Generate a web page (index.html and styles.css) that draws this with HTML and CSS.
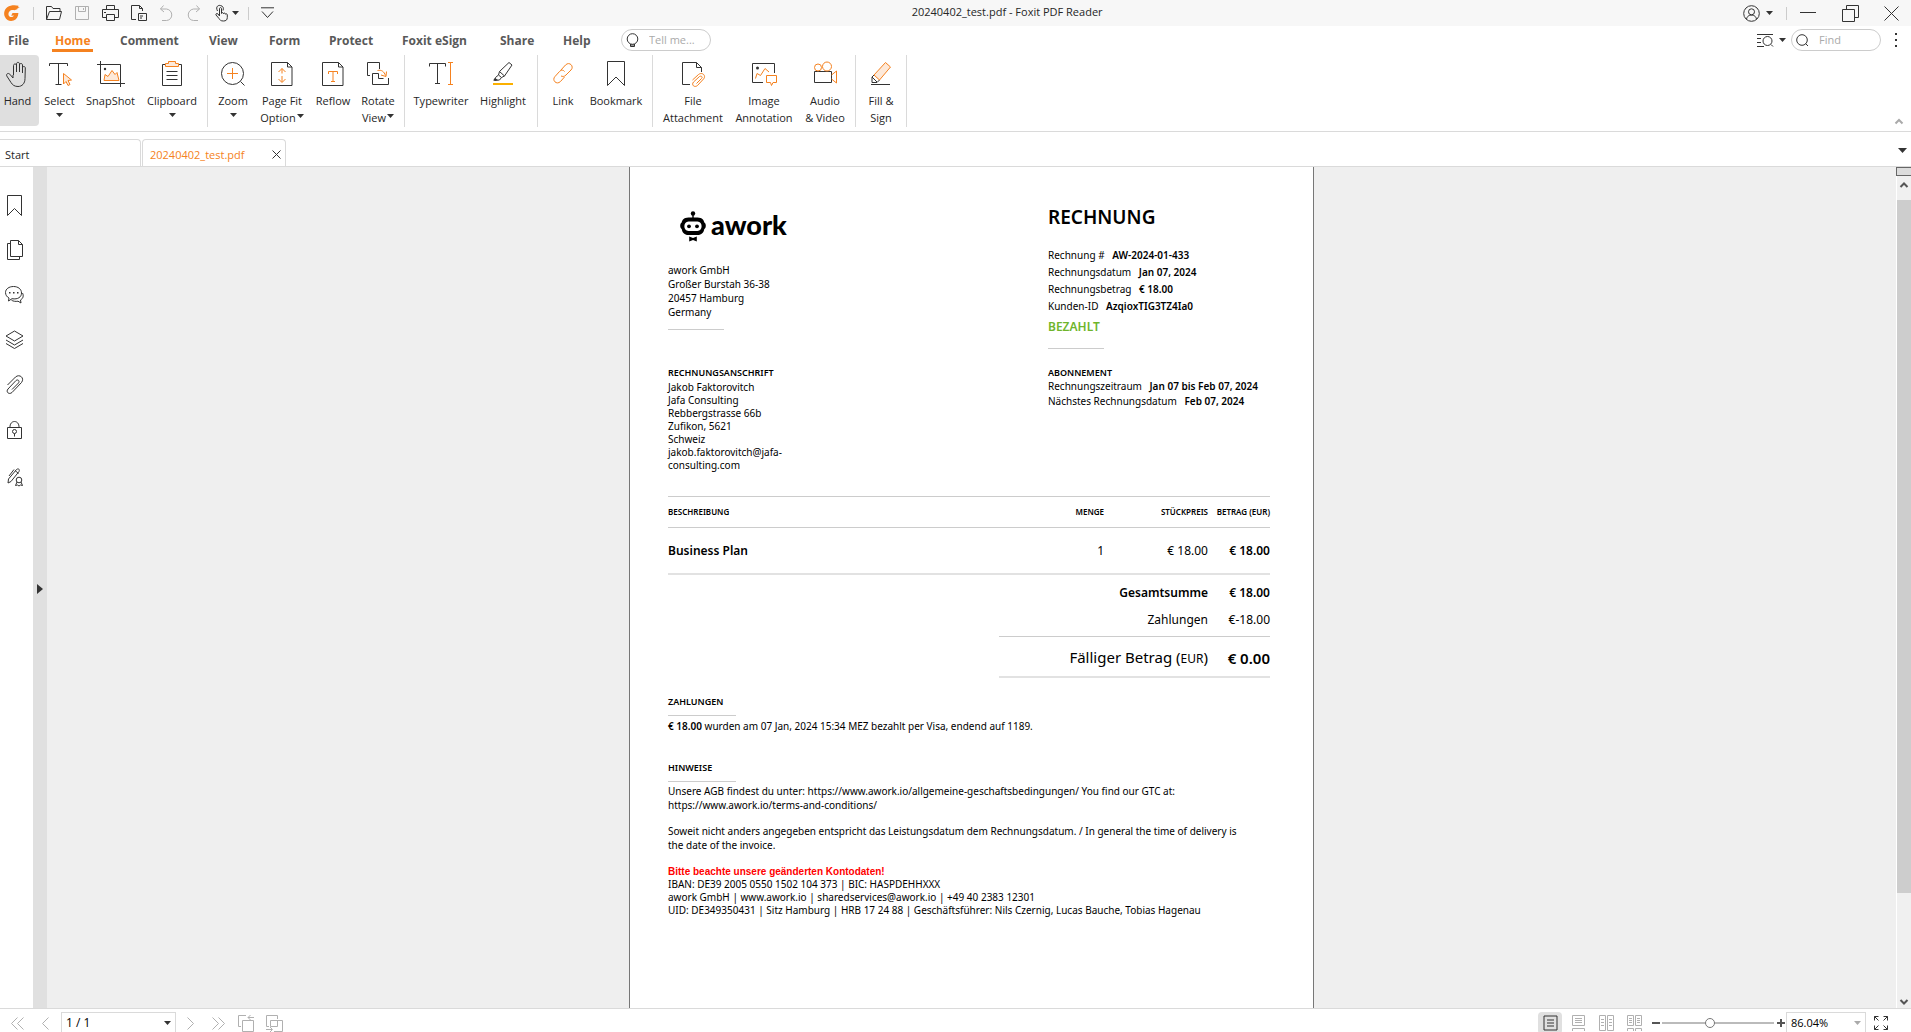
FILE: index.html
```html
<!DOCTYPE html>
<html lang="en">
<head>
<meta charset="utf-8">
<title>20240402_test.pdf - Foxit PDF Reader</title>
<link rel="stylesheet" href="styles.css">
</head>
<body>
<div class="app">

<header class="titlebar">
  <div class="quick">
    <svg class="logo" width="16" height="16" viewBox="0 0 16 16"><path d="M14.500 .8C11-.2 6.600 0 3.200 2.200.2 4.500-.6 8.700 1 12c1.600 3.400 5.400 4.700 8.600 3.400 2.900-1 4.700-3.900 4.800-7.500l-5.900.2-1.300 2.600 2.700-.2c-.8 1.500-2.600 2.100-4.100 1.200-1.700-1.100-1.800-3.700-.4-5.300 1.300-1.500 3.300-1.800 5-1.200l3.400-1.100-1.100-.2 3.100-1.600-1.700-.1z" fill="#f58220"/></svg>
    <i class="bar"></i>
    <button class="tool" aria-label="Open"><svg width="18" height="16" viewBox="0 0 18 16"><path d="M1.500 14.500v-13h5l1.500 2h7v3M1.500 14.500l3-8h12l-2 8z"/></svg></button>
    <button class="tool off" aria-label="Save"><svg width="16" height="16" viewBox="0 0 16 16"><path d="M1.500 1.500h13v13h-13zM4.500 1.500v5h7v-5M9.500 3v2"/></svg></button>
    <button class="tool" aria-label="Print"><svg width="17" height="17" viewBox="0 0 17 17"><path d="M4.500 4.500v-4h8v4M4 12.500H.5v-8h16v8H13M4.500 9.500h8v6h-8zM2 7.500h2"/></svg></button>
    <button class="tool" aria-label="Print file"><svg width="17" height="17" viewBox="0 0 17 17"><path d="M6 14.500H1.500V.5h8l3 3V6M9.500.5v3h3M8.500 8.500h8v7h-8zM10 11h3M10 13h2"/></svg></button>
    <button class="tool off" aria-label="Undo"><svg width="16" height="17" viewBox="0 0 16 17"><path d="M5.500.5l-3 3.500 3.500 3M2.500 4h6c7 1 7 11 0 11.500H4"/></svg></button>
    <button class="tool off" aria-label="Redo"><svg width="16" height="17" viewBox="0 0 16 17"><path d="M10.500.5l3 3.500-3.500 3M13.500 4h-6c-7 1-7 11 0 11.500H12"/></svg></button>
    <button class="tool wide" aria-label="Touch mode"><svg width="15" height="17" viewBox="0 0 15 17"><path d="M5.500 11V4c0-2 2-2 2 0v4.500c.5-1.500 2-1 2 .3.500-1.200 2-.8 2 .4.500-.8 1.800-.5 1.800.8v2.500c0 2.500-1.500 3.500-3.800 3.500-3 0-3.500-1-4.500-2.500l-3-3.500c-.6-1.500 1-2 2-1zM3.500 6C1 1 5 0 6.500.5c2.500.5 3.500 2.500 2.500 5"/></svg><svg class="tri" width="7" height="4" viewBox="0 0 7 4"><path d="M0 0h7L3.500 4z"/></svg></button>
    <i class="bar"></i>
    <button class="tool" aria-label="Customize toolbar"><svg width="13" height="12" viewBox="0 0 13 12"><path d="M0 .8h13M1 4.500l5.500 6 5.500-6"/></svg></button>
  </div>
  <h1 class="title">20240402_test.pdf - Foxit PDF Reader</h1>
  <div class="window">
    <button class="user" aria-label="Account"><svg width="17" height="17" viewBox="0 0 17 17"><circle cx="8.500" cy="8.500" r="7.800"/><circle cx="8.500" cy="6.800" r="3"/><path d="M3.500 14c1-3.500 3-3.800 5-3.800s4 .3 5 3.800"/></svg><svg class="tri" width="7" height="4" viewBox="0 0 7 4"><path d="M0 0h7L3.500 4z"/></svg></button>
    <i class="bar"></i>
    <button class="win" aria-label="Minimize"><svg width="16" height="16" viewBox="0 0 16 16"><path d="M0 7.500h16"/></svg></button>
    <button class="win" aria-label="Restore"><svg width="17" height="17" viewBox="0 0 17 17"><path d="M.5 4.500h12v12H.5zM4.500 4.500v-4h12v12h-4"/></svg></button>
    <button class="win" aria-label="Close"><svg width="15" height="15" viewBox="0 0 15 15"><path d="M.5.500l14 14M14.500.5l-14 14"/></svg></button>
  </div>
</header>

<div class="menubar">
  <nav class="menu">
    <a href="#file">File</a><a href="#home" class="current">Home</a><a href="#comment">Comment</a><a href="#view">View</a><a href="#form">Form</a><a href="#protect">Protect</a><a href="#esign">Foxit eSign</a><a href="#share">Share</a><a href="#help">Help</a>
  </nav>
  <label class="search"><svg width="13" height="15" viewBox="0 0 13 15"><circle cx="6.500" cy="6" r="5.300"/><path d="M4.500 11v2.500h4V11M4.500 12h4"/></svg><input type="text" placeholder="Tell me..." aria-label="Tell me"></label>
  <div class="finder">
    <button class="advanced" aria-label="Advanced search"><svg width="17" height="13" viewBox="0 0 17 13"><path d="M0 .5h16M0 4.500h4M0 8.500h4M0 12.500h7M14 10.500l2 2"/><circle cx="10.500" cy="7" r="4.500"/></svg><svg class="tri" width="7" height="4" viewBox="0 0 7 4"><path d="M0 0h7L3.500 4z"/></svg></button>
    <label class="search"><svg width="13" height="13" viewBox="0 0 13 13"><circle cx="6" cy="6" r="5.300"/><path d="M9.500 9.500l2.500 2.500"/></svg><input type="text" placeholder="Find" aria-label="Find"></label>
    <button class="more" aria-label="More"><svg width="2" height="14" viewBox="0 0 2 14"><path class="solid" d="M0 0h2v2H0zM0 6h2v2H0zM0 12h2v2H0z"/></svg></button>
  </div>
</div>

<div class="ribbon">
  <div class="group basic">
    <button class="cmd active"><svg width="24" height="26" viewBox="0 0 24 26"><path d="M7.500 14V4.500c0-2 3-2 3 0V11 3c0-2.200 3-2.200 3 0v8V4c0-2 3-2 3 0v8-5c0-2 2.800-2 2.800 0L19 17.500c0 5-3 8-7 8-3.500 0-5.500-1.500-7-4L.8 15c-1-2 1.500-3.500 3-1.800L7 17v-3"/></svg><span>Hand</span></button>
    <button class="cmd"><svg width="24" height="26" viewBox="0 0 24 26"><path d="M1.500 5V2.500h18V5M10.500 2.500v21M7.500 23.500h6"/><path class="or tint" d="M15.500 12.500l8 6.500-3.500.5 2 4-2 1-2-4-2.500 2.500z"/></svg><span>Select</span><svg class="tri" width="7" height="4" viewBox="0 0 7 4"><path d="M0 0h7L3.500 4z"/></svg></button>
    <button class="cmd"><svg width="28" height="26" viewBox="0 0 28 26"><path d="M0 3.500h23.500V26M3.500 0v22.500H28"/><path class="or tint" d="M7 19.500l1-6 3 2 4-6 3 4 2-2 2 8z"/><circle class="solid" cx="8" cy="8" r="1.200"/></svg><span>SnapShot</span></button>
    <button class="cmd"><svg width="24" height="26" viewBox="0 0 24 26"><path d="M6 3.500H2.500v21h19v-21H18M6.500 10.500h11M6.500 14.500h11M6.500 18.500h11"/><path class="or tint" d="M5.500 5.500v-3h3v-2h7v2h3v3z"/></svg><span>Clipboard</span><svg class="tri" width="7" height="4" viewBox="0 0 7 4"><path d="M0 0h7L3.500 4z"/></svg></button>
  </div>
  <div class="group viewing">
    <button class="cmd"><svg width="26" height="26" viewBox="0 0 26 26"><circle cx="12.500" cy="12.500" r="11"/><path d="M20.500 20.500l4 4"/><path class="or" d="M12.500 7v11M7 12.500h11"/></svg><span>Zoom</span><svg class="tri" width="7" height="4" viewBox="0 0 7 4"><path d="M0 0h7L3.500 4z"/></svg></button>
    <button class="cmd"><svg width="22" height="26" viewBox="0 0 22 26"><path d="M.5 1.500h16l4.500 4.500v18.500H.5zM16.500 1.500V6H21"/><path class="or" d="M11 7.500v5M11 15v6M7.500 11L11 7.500l3.500 3.500M7.500 18l3.500 3.500 3.500-3.500"/></svg><span>Page Fit<br>Option<svg class="tri" width="7" height="4" viewBox="0 0 7 4"><path d="M0 0h7L3.500 4z"/></svg></span></button>
    <button class="cmd"><svg width="22" height="26" viewBox="0 0 22 26"><path d="M.5 1.500h16l4.500 4.500v18.500H.5zM16.500 1.500V6H21"/><path class="or" d="M6.500 13v-2.500h9V13M11 10.500v10M9 20.500h4"/></svg><span>Reflow</span></button>
    <button class="cmd"><svg width="24" height="26" viewBox="0 0 24 26"><path d="M4 14.500H1.500v-13h12V8M22.500 17v6.500h-16v-11h6v5h5"/><path class="or" d="M11.500 9.500c4-1 6.500 1 8 5M20.500 10.500l-.5 5-5-1.500"/></svg><span>Rotate<br>View<svg class="tri" width="7" height="4" viewBox="0 0 7 4"><path d="M0 0h7L3.500 4z"/></svg></span></button>
  </div>
  <div class="group marking">
    <button class="cmd"><svg width="24" height="26" viewBox="0 0 24 26"><path d="M.5 5.500v-3h16v3M8.500 2.500v20M6 22.500h5"/><path class="or" d="M21.500 1.500v22M19 1.500h5M19 23.500h5"/></svg><span>Typewriter</span></button>
    <button class="cmd"><svg width="22" height="26" viewBox="0 0 22 26"><path d="M17 1.500l3 2.500-7.500 11-3 1.500-3-2.500 1-3.500zM7.500 10.500l5 4.500M6.500 14l-3 2.500-1 3 5-.5 2-2.500"/><path class="solid" d="M3 17l3 2-5 .5z"/><path class="amber" d="M1 23h20"/></svg><span>Highlight</span></button>
  </div>
  <div class="group linking">
    <button class="cmd"><svg width="24" height="26" viewBox="0 0 24 26"><path class="or" d="M9.500 9.500l5-5.500c4-4 9 1.500 5.500 5l-5 5c-2 2-3.500 1.500-5 1M13.500 16l-4 4.500c-4 4-9-1.500-5.500-5l4.500-5c2-2 4-1.500 5 0"/></svg><span>Link</span></button>
    <button class="cmd"><svg width="20" height="26" viewBox="0 0 20 26"><path d="M1.500.5h17v24l-8.500-8.500-8.500 8.500z"/></svg><span>Bookmark</span></button>
  </div>
  <div class="group inserting">
    <button class="cmd"><svg width="24" height="26" viewBox="0 0 24 26"><path d="M9 23.500H1.500v-22h14l5 5V11M15.500 1.500v5h5"/><path class="or" d="M11.500 19l6-5.500c4-3 8 1.500 5 4.500l-6 6.500c-3 2.500-6.500-.5-4-3.500l6-5.500c2-1 3.500.5 2 2l-5 5"/></svg><span>File<br>Attachment</span></button>
    <button class="cmd"><svg width="26" height="26" viewBox="0 0 26 26"><path d="M12 21.500H1.500v-19h22V12"/><circle class="solid" cx="6.500" cy="7" r="1.500"/><path class="or" d="M4.500 17.500l1.500-5 3.500 2 4.500-7 4 3.500M15.500 14.500h10v7h-3.500l-1.500 3-1-3h-4z"/></svg><span>Image<br>Annotation</span></button>
    <button class="cmd"><svg width="25" height="26" viewBox="0 0 25 26"><path d="M1.500 10.500h17v11h-17z"/><path class="or" d="M18.500 14l5-4v12l-5-4"/><circle class="or" cx="5" cy="6.500" r="3.500"/><circle class="or" cx="14" cy="5.500" r="4.500"/></svg><span>Audio<br>&amp; Video</span></button>
  </div>
  <div class="group signing">
    <button class="cmd"><svg width="22" height="26" viewBox="0 0 22 26"><path class="or tint" d="M15.500 1.500l5 4.500-11 13-5.500-5z"/><path d="M4 14l-2 2v5.500h5l2.500-2.500M2 16l5 5M1 23.500h19"/></svg><span>Fill &amp;<br>Sign</span></button>
  </div>
  <button class="collapse" aria-label="Collapse ribbon"><svg width="8" height="5" viewBox="0 0 8 5"><path d="M.5 4.500L4 1l3.500 3.500"/></svg></button>
</div>

<div class="tabs">
  <a class="tab" href="#start">Start</a>
  <div class="tab open"><a href="#doc">20240402_test.pdf</a><button aria-label="Close tab"><svg width="9" height="9" viewBox="0 0 9 9"><path d="M.5.500l8 8M8.500.5l-8 8"/></svg></button></div>
  <button class="tablist" aria-label="Tab list"><svg class="tri" width="9" height="5" viewBox="0 0 9 5"><path d="M0 0h9L4.500 5z"/></svg></button>
</div>

<main class="work">
  <aside class="panels">
    <button aria-label="Bookmarks"><svg width="20" height="22" viewBox="0 0 20 22"><path d="M3.500 1.500h14v20l-7-7-7 7z"/></svg></button>
    <button aria-label="Pages"><svg width="20" height="22" viewBox="0 0 20 22"><path d="M6.500 1.500h8l4 4v12h-12zM14.500 1.500v4h4M6.500 4.500h-3v16h12v-3"/></svg></button>
    <button aria-label="Comments"><svg width="20" height="22" viewBox="0 0 20 22"><path d="M5 14l-.5 3 3.500-2.300c6 1 9.500-1.700 9.500-5.700S14 2.500 9.500 2.500 1.500 5 1.500 8.500C1.500 11 3 13 5 14zM18.500 9c1.500 3 .5 5.500-2 7l.5 3-3-1.800c-2.500.5-5 0-6.500-1"/><path class="solid" d="M5 8h1.500v1.500H5zM9 8h1.500v1.500H9zM13 8h1.500v1.500H13z"/></svg></button>
    <button aria-label="Layers"><svg width="20" height="22" viewBox="0 0 20 22"><path d="M10.500 2l8.500 5-8.500 5L2 7zM2 11l8.500 5 8.500-5M2 14.500l8.500 5 8.500-5"/></svg></button>
    <button aria-label="Attachments"><svg width="20" height="22" viewBox="0 0 20 22"><path d="M3.500 11l8-8c4-3.500 9.500 1 6 5.500l-9.500 10c-3 2.500-6.500-.5-4-3.500l8-8.500c2-1.500 4 .5 2.500 2.500L8 15.500"/></svg></button>
    <button aria-label="Security"><svg width="20" height="22" viewBox="0 0 20 22"><path d="M3.500 8.500h14v11h-14zM6 8.500c-.5-8 9.500-8 9 0"/><circle cx="10.500" cy="12.500" r="2"/><path d="M10.500 14.500v3"/></svg></button>
    <button aria-label="Signatures"><svg width="20" height="22" viewBox="0 -3 20 22"><path d="M4 16l.5-4 8-9.500c2-1.500 3.500 0 2.500 2L7 14.500zM11 3.500l3.500 3M5 9l5-6.500"/><circle cx="15" cy="13" r="2.800"/><path d="M13 15l-1.500 3.500 2-.5 1.500 1 1.500-1 2 .5L17 15"/></svg></button>
  </aside>
  <button class="strip" aria-label="Expand panel"><svg class="tri" width="6" height="10" viewBox="0 0 6 10"><path d="M0 0l6 5-6 5z"/></svg></button>

  <div class="canvas">
    <article class="page" lang="de">
      <div class="parties">
        <div class="left">
          <div class="brand"><svg width="26" height="31" viewBox="0 0 26 31"><circle cx="13" cy="2.500" r="2.200"/><path d="M12.300 3h1.400v5h-1.400z"/><path fill-rule="evenodd" d="M8.500 6.500h9c5 0 6.500 3 6.800 5 2 .5 2 6 0 6.500-.6 3.500-2.600 6-6.800 6h-9c-4.200 0-6.200-2.500-6.800-6-2-.5-2-6 0-6.500.3-2 1.800-5 6.800-5zm0 4c-5.500 0-5.500 9.500 0 9.500h9c5.500 0 5.500-9.500 0-9.500z"/><circle cx="9" cy="15.300" r="1.900"/><circle cx="17" cy="15.300" r="1.900"/><path d="M9.200 25.500l3.800 1.500 3.800-1.500v5L13 29l-3.800 1.500z"/></svg><b>awork</b></div>
          <address>awork GmbH<br>Großer Burstah 36-38<br>20457 Hamburg<br>Germany</address>
          <hr>
        </div>
        <div class="facts">
          <h2>RECHNUNG</h2>
          <p>Rechnung # <b>AW-2024-01-433</b></p>
          <p>Rechnungsdatum <b>Jan 07, 2024</b></p>
          <p>Rechnungsbetrag <b>€ 18.00</b></p>
          <p>Kunden-ID <b>AzqioxTIG3TZ4Ia0</b></p>
          <strong class="paid">BEZAHLT</strong>
          <hr>
        </div>
        <div class="billto">
          <h3>RECHNUNGSANSCHRIFT</h3>
          <address>Jakob Faktorovitch<br>Jafa Consulting<br>Rebbergstrasse 66b<br>Zufikon, 5621<br>Schweiz<br>jakob.faktorovitch@jafa-<br>consulting.com</address>
        </div>
        <div class="plan">
          <h3>ABONNEMENT</h3>
          <p>Rechnungszeitraum <b>Jan 07 bis Feb 07, 2024</b></p>
          <p>Nächstes Rechnungsdatum <b>Feb 07, 2024</b></p>
        </div>
      </div>

      <table class="items">
        <colgroup><col class="desc"><col class="qty"><col class="unit"><col class="sum"></colgroup>
        <thead><tr><th scope="col">BESCHREIBUNG</th><th scope="col">MENGE</th><th scope="col">STÜCKPREIS</th><th scope="col">BETRAG (EUR)</th></tr></thead>
        <tbody><tr class="item"><td><b>Business Plan</b></td><td>1</td><td>€ 18.00</td><td><b>€ 18.00</b></td></tr></tbody>
        <tfoot>
          <tr class="total"><td></td><td colspan="2"><b>Gesamtsumme</b></td><td><b>€ 18.00</b></td></tr>
          <tr class="payments"><td></td><td colspan="2">Zahlungen</td><td>€-18.00</td></tr>
          <tr class="due"><td></td><td colspan="2">Fälliger Betrag (<small>EUR</small>)</td><td><b>€ 0.00</b></td></tr>
        </tfoot>
      </table>

      <section class="note">
        <h4>ZAHLUNGEN</h4>
        <hr>
        <p><b>€ 18.00</b> wurden am 07 Jan, 2024 15:34 MEZ bezahlt per Visa, endend auf 1189.</p>
      </section>
      <section class="note">
        <h4>HINWEISE</h4>
        <hr>
        <p>Unsere AGB findest du unter: https://www.awork.io/allgemeine-geschaftsbedingungen/ You find our GTC at:<br>https://www.awork.io/terms-and-conditions/</p>
        <p>Soweit nicht anders angegeben entspricht das Leistungsdatum dem Rechnungsdatum. / In general the time of delivery is<br>the date of the invoice.</p>
        <p class="bank"><strong>Bitte beachte unsere geänderten Kontodaten!</strong><br>IBAN: DE39 2005 0550 1502 104 373 | BIC: HASPDEHHXXX<br>awork GmbH | www.awork.io | sharedservices@awork.io | +49 40 2383 12301<br>UID: DE349350431 | Sitz Hamburg | HRB 17 24 88 | Geschäftsführer: Nils Czernig, Lucas Bauche, Tobias Hagenau</p>
      </section>
    </article>
  </div>

  <div class="scroll">
    <i class="split"></i>
    <button aria-label="Scroll up"><svg width="8" height="6" viewBox="0 0 8 6"><path d="M.5 5L4 1.500 7.500 5"/></svg></button>
    <div class="track"><i class="thumb"></i></div>
    <button class="down" aria-label="Scroll down"><svg width="8" height="6" viewBox="0 0 8 6"><path d="M.5 1L4 4.500 7.500 1"/></svg></button>
  </div>
</main>

<footer class="status">
  <div class="pager">
    <button aria-label="First page"><svg width="13" height="13" viewBox="0 0 13 13"><path d="M6.500.5l-6 6 6 6M12.500.5l-6 6 6 6"/></svg></button>
    <button aria-label="Previous page"><svg width="7" height="13" viewBox="0 0 7 13"><path d="M6.500.5l-6 6 6 6"/></svg></button>
    <span class="combo pageno"><select aria-label="Page"><option>1 / 1</option></select><svg class="tri" width="7" height="4" viewBox="0 0 7 4"><path d="M0 0h7L3.500 4z"/></svg></span>
    <button aria-label="Next page"><svg width="7" height="13" viewBox="0 0 7 13"><path d="M.5.500l6 6-6 6"/></svg></button>
    <button aria-label="Last page"><svg width="13" height="13" viewBox="0 0 13 13"><path d="M.5.500l6 6-6 6M6.500.5l6 6-6 6"/></svg></button>
    <button aria-label="Previous view"><svg width="17" height="17" viewBox="0 0 17 17"><path d="M3 11.500H.5v-11H8M4.500 5.500h11v11h-11zM16 2.500h-6M12.500 0L10 2.500 12.500 5"/></svg></button>
    <button aria-label="Next view"><svg width="17" height="17" viewBox="0 0 17 17"><path d="M3 11.500H.5v-11h11V4M8 16.500h8.500v-11h-12v6h7v-6M0 14.500h6M4 12l2.500 2.500L4 17"/></svg></button>
  </div>
  <div class="zoombar">
    <button class="mode on" aria-label="Single page"><svg width="15" height="16" viewBox="0 0 15 16"><path d="M1 1h13v14H1zM4 5h7M4 8h7M4 11h7"/></svg></button>
    <button class="mode" aria-label="Continuous"><svg width="15" height="16" viewBox="0 0 15 16"><path d="M1.500.500h12v10h-12zM4 3.500h7M4 5.500h7M4 7.500h7M1.500 16v-2.500h12V16"/></svg></button>
    <button class="mode" aria-label="Facing"><svg width="15" height="16" viewBox="0 0 15 16"><path d="M.5.500h6v15h-6zM8.500.5h6v15h-6zM2 4.500h3M2 7.500h3M2 10.500h3M10 4.500h3M10 7.500h3M10 10.500h3"/></svg></button>
    <button class="mode" aria-label="Continuous facing"><svg width="15" height="16" viewBox="0 0 15 16"><path d="M.5.500h6v10h-6zM8.500.5h6v10h-6zM2 3.500h3M2 5.500h3M2 7.500h3M10 3.500h3M10 5.500h3M10 7.500h3M.5 16v-2.500h6V16M8.500 16v-2.500h6V16"/></svg></button>
    <button class="step" aria-label="Zoom out"><svg width="8" height="8" viewBox="0 0 8 8"><path d="M0 4h8"/></svg></button>
    <input type="range" min="0" max="100" value="42" aria-label="Zoom">
    <button class="step" aria-label="Zoom in"><svg width="8" height="8" viewBox="0 0 8 8"><path d="M0 4h8M4 0v8"/></svg></button>
    <span class="combo percent"><select aria-label="Zoom level"><option>86.04%</option></select><svg class="tri" width="7" height="4" viewBox="0 0 7 4"><path d="M0 0h7L3.500 4z"/></svg></span>
    <button class="full" aria-label="Full screen"><svg width="14" height="14" viewBox="0 0 14 14"><path d="M.5 4.500v-4h4M.5.500l4 4M9.500.5h4v4M13.500.5l-4 4M.5 9.500v4h4M.5 13.500l4-4M13.500 9.500v4h-4M13.500 13.500l-4-4"/></svg></button>
  </div>
</footer>
</div>
</body>
</html>
```
FILE: styles.css
```css
* { box-sizing: border-box; }
body { margin: 0; background: #fff; color: #262626; font: 11px/16px "Open Sans", "Noto Sans", sans-serif; }
h1, h2, h3, h4, p, address { margin: 0; font-size: inherit; font-style: normal; }
button { border: 0; padding: 0; background: none; color: inherit; font: inherit; display: flex; align-items: center; justify-content: center; }
a { color: inherit; text-decoration: none; }
svg { display: block; flex: none; overflow: visible; fill: none; stroke: #333; stroke-width: 1; }
.solid { fill: #333; stroke: none; }
.tri { fill: #333; stroke: none; }
.or { stroke: #f58220; }
.tint { fill: #fde9d9; }
.amber { stroke: #fbb000; stroke-width: 2; }
.bar { width: 1px; height: 13px; background: #ccc; flex: none; }

.app { height: 100vh; display: grid; grid-template-rows: 26px 28px 78px 35px minmax(0, 1fr) 24px; overflow: hidden; }

/* title bar */
.titlebar { display: grid; grid-template-columns: 53fr auto 47fr; align-items: center; background: #f7f7f7; }
.quick { display: flex; align-items: center; height: 24px; padding-left: 4px; }
.quick .logo { stroke: none; margin-right: 13px; }
.quick .bar + .tool { margin-left: 6px; }
.tool { width: 28px; height: 24px; }
.tool.wide { width: 40px; gap: 3px; padding-right: 4px; }
.quick .wide + .bar + .tool { margin-left: 4px; }
.off svg { stroke: #b0b0b0; }
.title { height: 18px; font-weight: 400; }
.window { display: flex; align-items: center; justify-content: flex-end; }
.user { gap: 6px; margin-right: 13px; }
.win { width: 42px; height: 24px; }
.win:last-child { width: 40px; }

/* menu tabs */
.menubar { display: flex; align-items: center; }
.menu { display: grid; grid-template-columns: 46px 66px 89px 60px 60px 73px 98px 63px 58px; padding-left: 8px; font-weight: 700; font-size: 12px; line-height: 23px; color: #595959; }
.menu a { justify-self: start; }
.menu .current { color: #f58220; box-shadow: inset 0 -3px #f58220; padding: 0 3px; margin-left: -2px; }
.search { display: flex; align-items: center; width: 90px; height: 22px; padding-left: 4px; gap: 10px; border: 1px solid #ccc; border-radius: 11px; }
.search input { width: 56px; border: 0; padding: 0; outline: 0; background: none; font: inherit; }
.search input::placeholder { color: #aaa; }
.finder { display: flex; align-items: center; margin-left: auto; }
.advanced { gap: 5px; margin-right: 5px; }
.more { width: 30px; height: 22px; }

/* ribbon */
.ribbon { display: flex; align-items: flex-start; padding-top: 1px; border-bottom: 1px solid #dadada; }
.group { display: grid; padding-right: 4px; margin-right: 4px; border-right: 1px solid #dadada; height: 72px; }
.basic { grid-template-columns: 39px 41px 61px 62px; }
.viewing { grid-template-columns: 42px 56px 46px 44px; }
.marking { grid-template-columns: 64px 60px; }
.linking { grid-template-columns: 42px 64px; }
.inserting { grid-template-columns: 72px 70px 52px; }
.signing { grid-template-columns: 42px; }
.cmd { flex-direction: column; justify-content: flex-start; padding-top: 6px; height: 71px; line-height: 17px; white-space: nowrap; }
.cmd span { margin-top: 5px; }
.cmd span .tri { display: inline-block; margin: 0 0 4px 1px; }
.cmd > .tri { margin-top: 4px; }
.cmd.active { background: #dfdfdf; border-radius: 0 4px 4px 0; padding-right: 4px; }
.collapse { margin-left: auto; align-self: flex-end; width: 25px; height: 20px; }
.collapse svg { stroke: #aaa; stroke-width: 2; }

/* document tabs */
.tabs { display: flex; align-items: flex-end; gap: 1px; border-bottom: 1px solid #dadada; }
.tab { display: flex; align-items: center; justify-content: space-between; height: 27px; width: 141px; padding: 3px 5px 0; border: 1px solid #dadada; border-width: 1px 1px 0 0; border-radius: 0 4px 0 0; }
.tab.open { width: 144px; padding-left: 7px; padding-right: 4px; border-left-width: 1px; border-radius: 4px 4px 0 0; color: #f58220; }
.tablist { margin-left: auto; width: 18px; height: 32px; }

/* work area */
.work { display: flex; min-height: 0; background: #efefef; }
.panels { width: 33px; padding: 27px 0 0 4px; display: flex; flex-direction: column; gap: 23px; background: #fff; }
.panels button { width: 20px; height: 22px; }
.strip { width: 14px; padding-top: 2px; background: #e0e0e0; }
.canvas { flex: 1; min-width: 0; overflow: hidden; }

/* invoice page */
.page { width: min(100%, 685px); min-height: 100%; margin: 0 auto; padding: 44px 43px 0 38px; background: #fff; border: 1px solid #777; border-width: 0 1px; color: #000; font: 10px/14px "Noto Sans", "Open Sans", sans-serif; }
.page b, .page h2, .page h3, .page h4, .paid { font-weight: 600; }
.page hr { margin: 0; border: 0; height: 1px; background: #ccc; }
.parties { display: grid; grid-template-columns: 380px 1fr; }
.brand { display: flex; align-items: flex-start; gap: 5px; height: 31px; margin: 0 0 21px 12px; }
.brand svg { fill: #000; stroke: none; }
.page .brand b { font: 900 27px/28px Lato, sans-serif; }
.left hr { width: 56px; margin-top: 10px; }
.facts h2 { font-size: 19px; line-height: 24px; margin: -6px 0 18px; }
.facts p { line-height: 17px; }
.facts b, .plan b { margin-left: 5px; }
.paid { display: block; margin-top: 4px; font-size: 12px; line-height: 16px; color: #6fb52c; }
.facts hr { width: 56px; margin: 13px 0 18px; }
.page h3 { font-size: 9px; line-height: 12px; }
.billto address { line-height: 13px; padding: 2px 0 24px; }
.plan p { line-height: 15px; }

.items { width: 100%; table-layout: fixed; border-collapse: separate; border-spacing: 0; font-size: 12px; line-height: 16px; }
.items .qty { width: 105px; }
.items .unit { width: 104px; }
.items .sum { width: 62px; }
.items th, .items td { padding: 0; text-align: right; white-space: nowrap; }
.items th:first-child, .items td:first-child { text-align: left; }
.items th { height: 32px; font-size: 8px; font-weight: 600; border: 1px solid #ccc; border-width: 1px 0; }
.item td { height: 47px; border-bottom: 2px solid #e2e2e2; }
.total td { height: 31px; }
.items .total td { padding-top: 5px; }
.payments td { height: 31px; }
.items .payments td { padding-bottom: 3px; }
.payments td + td { border-bottom: 1px solid #ccc; }
.due td { height: 41px; font-size: 15px; line-height: 20px; }
.items .due td { padding-top: 3px; }
.due td + td { border-bottom: 2px solid #e2e2e2; }
.due small { font-size: 12px; }

.note { padding-top: 17px; }
.note h4 { font-size: 9px; line-height: 14px; }
.note hr { width: 68px; margin: 6px 0 3px; }
.note + .note { padding-top: 28px; }
.note + .note hr { margin-bottom: 2px; }
.note p + p { margin-top: 12px; }
.note p.bank { margin-top: 13px; line-height: 13px; }
.bank strong { font-family: "Liberation Sans", Arial, sans-serif; color: #f00; }

/* scroll bar */
.scroll { width: 15px; display: flex; flex-direction: column; background: #f0f0f0; border-left: 1px solid #fff; }
.scroll svg { stroke: #555; stroke-width: 2; }
.split { height: 9px; background: #dcdcdc; border: 1px solid #666; border-right: 0; margin-left: -1px; }
.scroll button { height: 18px; }
.scroll .down { height: 12px; }
.track { flex: 1; padding-top: 6px; }
.thumb { display: block; height: 87%; background: #cdcdcd; }

/* status bar */
.status { display: flex; justify-content: space-between; border-top: 1px solid #dadada; overflow: hidden; background: #fff; }
.pager, .zoombar { display: flex; align-items: center; height: 22px; margin-top: 3px; }
.pager button { width: 28px; height: 22px; }
.pager button svg, .mode svg { stroke: #b0b0b0; }
.pager { padding-left: 3px; }
.combo { display: flex; align-items: center; height: 22px; border: 1px solid #dadada; padding: 0 4px; }
.combo select { flex: 1; min-width: 0; appearance: none; border: 0; padding: 0; background: none; font: inherit; color: #000; }
.pageno { width: 115px; margin: 0 0 0 2px; font-size: 12px; }
.mode { width: 24px; height: 22px; margin-right: 4px; }
.mode.on { background: #e0e0e0; border-radius: 4px; }
.mode.on svg { stroke: #333; }
.step { width: 11px; height: 22px; }
.step svg { stroke: #555; stroke-width: 2; }
.zoombar input { appearance: none; width: 112px; height: 22px; margin: 0 1px; background: none; }
.zoombar input::-webkit-slider-runnable-track { height: 2px; background: #bbb; }
.zoombar input::-webkit-slider-thumb { appearance: none; width: 10px; height: 10px; margin-top: -4px; border: 1px solid #777; border-radius: 50%; background: #fff; }
.percent { width: 80px; font-size: 11px; }
.percent .tri { fill: #aaa; }
.full { width: 30px; height: 22px; margin-right: 15px; }
```
